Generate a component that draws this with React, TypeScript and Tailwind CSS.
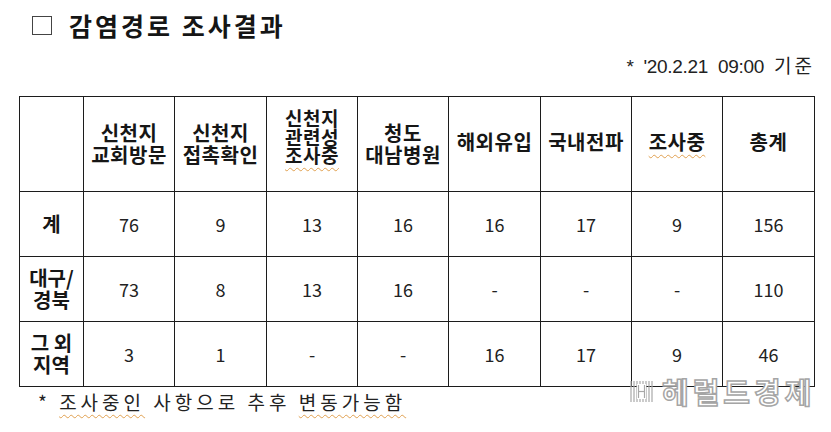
import React from "react";

const W = [64, 91, 92, 91, 91, 92, 91, 91, 92];

const squig = "underline decoration-wavy decoration-[#e0a050] decoration-[1px] underline-offset-[4px]";

const rows: { label: React.ReactNode; vals: string[] }[] = [
  { label: <>계</>, vals: ["76", "9", "13", "16", "16", "17", "9", "156"] },
  { label: <>대구/<br />경북</>, vals: ["73", "8", "13", "16", "-", "-", "-", "110"] },
  { label: <>그 외<br />지역</>, vals: ["3", "1", "-", "-", "16", "17", "9", "46"] },
];

export default function App() {
  const cell = "border-[1.5px] border-[#1c1c1c] text-center align-middle p-0";
  const head = `${cell} text-[20px] font-bold leading-[22px] tracking-[0.5px] text-[#161616]`;
  return (
    <div
      className="relative w-[831px] h-[432px] bg-white text-[#111] overflow-hidden"
      style={{ fontFamily: '"Noto Sans CJK KR", "Noto Sans", sans-serif' }}
    >
      {/* title */}
      <div className="mt-[10px] h-[30px] pl-[32px] flex items-center">
        <div className="w-[20px] h-[19px] border-[1.5px] border-[#444]" />
        <div className="ml-[17px] text-[25px] font-bold tracking-[3px] leading-[30px] text-[#151515]">
          감염경로 조사결과
        </div>
      </div>
      {/* date */}
      <div
        className="mt-[15px] h-[20px] leading-[20px] pr-[16px] text-right text-[19px] text-[#222]"
        style={{ fontFamily: '"Liberation Sans", "Noto Sans CJK KR", sans-serif' }}
      >
        <span className="tracking-[-0.3px]">*&nbsp;&nbsp;'20.2.21&nbsp;&nbsp;09:00&nbsp;&nbsp;</span>
        <span className="tracking-[3px]" style={{ fontFamily: '"Noto Sans CJK KR", sans-serif' }}>기준</span>
      </div>
      {/* table */}
      <div className="mt-[21px] pl-[19px]">
        <table className="table-fixed border-collapse w-[795px]">
          <colgroup>
            {W.map((w, i) => (
              <col key={i} style={{ width: w }} />
            ))}
          </colgroup>
          <thead>
            <tr className="h-[95px]">
              <th className={cell}></th>
              <th className={head}>신천지<br />교회방문</th>
              <th className={head}>신천지<br />접촉확인</th>
              <th className={`${cell} text-[19px] font-bold leading-[18.5px] tracking-[0.5px] text-[#161616]`}>
                <div className="-mt-[14px]">신천지<br />관련성<br /><span className={squig}>조사중</span></div>
              </th>
              <th className={head}>청도<br />대남병원</th>
              <th className={head}><div className="-mt-[4px]">해외유입</div></th>
              <th className={head}><div className="-mt-[4px]">국내전파</div></th>
              <th className={head}><div className="-mt-[4px]"><span className={squig}>조사중</span></div></th>
              <th className={head}><div className="-mt-[4px]">총계</div></th>
            </tr>
          </thead>
          <tbody>
            {rows.map((r, i) => (
              <tr key={i} className="h-[65px]">
                <td className={`${cell} text-[20px] font-bold leading-[22px] text-[#161616]`}>{r.label}</td>
                {r.vals.map((v, j) => (
                  <td key={j} className={`${cell} text-[18px] leading-[22px] text-[#222]`}>
                    {v}
                  </td>
                ))}
              </tr>
            ))}
          </tbody>
        </table>
      </div>
      {/* footnote */}
      <div className="mt-[2px] h-[26px] leading-[26px] pl-[38px] text-[19px] tracking-[4px] text-[#222]">
        *&nbsp;<span className={squig}>조사중인</span> 사항으로 추후 <span className={squig}>변동가능함</span>
      </div>
      {/* watermark */}
      <div className="absolute left-[630px] top-[377px] h-[28px] flex items-center gap-[9px]">
        <svg width="23" height="23" viewBox="0 0 23 23">
          {[1, 4, 7, 10, 13, 16, 19, 22].map((x, i) => (
            <line key={i} x1={x} y1="1" x2={x} y2="22" stroke="#a8a8a8" strokeWidth="1.2" />
          ))}
          <rect x="7" y="4" width="9" height="15" fill="white" />
          <line x1="8.5" y1="5" x2="8.5" y2="18" stroke="#a8a8a8" strokeWidth="1.2" />
          <line x1="14.5" y1="5" x2="14.5" y2="18" stroke="#a8a8a8" strokeWidth="1.2" />
          <line x1="8.5" y1="11.5" x2="14.5" y2="11.5" stroke="#a8a8a8" strokeWidth="1.2" />
        </svg>
        <span className="text-[29px] font-bold leading-[28px] tracking-[4px] text-white [-webkit-text-stroke:1.5px_#a5a5a5]">
          헤럴드경제
        </span>
      </div>
    </div>
  );
}
